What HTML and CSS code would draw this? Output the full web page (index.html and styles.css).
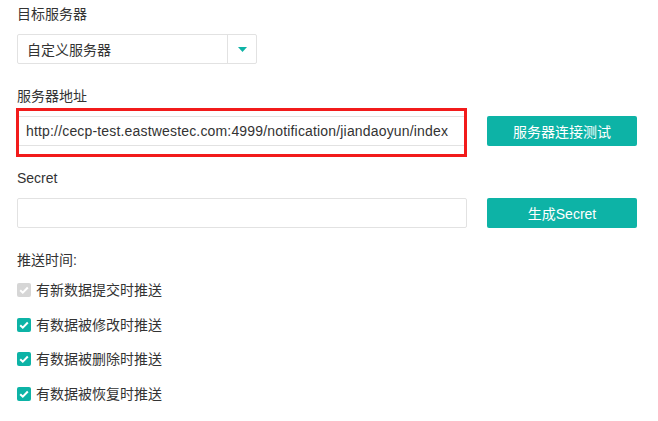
FILE: index.html
```html
<!DOCTYPE html>
<html lang="zh">
<head>
<meta charset="utf-8">
<title>推送设置</title>
<link rel="stylesheet" href="styles.css">
</head>
<body>
<div class="form">
  <div class="field">
    <div class="label">目标服务器</div>
    <div class="select">
      <span class="select-text">自定义服务器</span>
      <span class="select-arrow"><svg width="9" height="5" viewBox="0 0 9 5"><path d="M0 0H9L4.5 5Z" fill="#0db3a6"/></svg></span>
    </div>
  </div>
  <div class="field">
    <div class="label">服务器地址</div>
    <div class="row">
      <div class="input-wrap">
        <div class="input url">http://cecp-test.eastwestec.com:4999/notification/jiandaoyun/index</div>
        <div class="mark"></div>
      </div>
      <div class="btn">服务器连接测试</div>
    </div>
  </div>
  <div class="field">
    <div class="label">Secret</div>
    <div class="row">
      <div class="input-wrap">
        <div class="input"></div>
      </div>
      <div class="btn">生成Secret</div>
    </div>
  </div>
  <div class="field">
    <div class="label">推送时间:</div>
    <div class="checks">
      <div class="check"><span class="box disabled"><svg width="14" height="14" viewBox="0 0 14 14"><path d="M3.2 7.2L5.8 9.7L10.8 4.5" fill="none" stroke="#fff" stroke-width="2"/></svg></span>有新数据提交时推送</div>
      <div class="check"><span class="box"><svg width="14" height="14" viewBox="0 0 14 14"><path d="M3.2 7.2L5.8 9.7L10.8 4.5" fill="none" stroke="#fff" stroke-width="2"/></svg></span>有数据被修改时推送</div>
      <div class="check"><span class="box"><svg width="14" height="14" viewBox="0 0 14 14"><path d="M3.2 7.2L5.8 9.7L10.8 4.5" fill="none" stroke="#fff" stroke-width="2"/></svg></span>有数据被删除时推送</div>
      <div class="check"><span class="box"><svg width="14" height="14" viewBox="0 0 14 14"><path d="M3.2 7.2L5.8 9.7L10.8 4.5" fill="none" stroke="#fff" stroke-width="2"/></svg></span>有数据被恢复时推送</div>
    </div>
  </div>
</div>
</body>
</html>
```

FILE: styles.css
```css
html, body {
  margin: 0;
  padding: 0;
  background: #fff;
}
body {
  font-family: "Liberation Sans", "Noto Sans CJK SC", sans-serif;
  font-size: 14px;
  color: #333;
}
.form {
  padding: 4px 0 0 17px;
  display: flex;
  flex-direction: column;
  gap: 22px;
}
.field {
  display: flex;
  flex-direction: column;
  gap: 10px;
}
.label {
  line-height: 20px;
  height: 20px;
}
.select {
  width: 240px;
  height: 30px;
  box-sizing: border-box;
  border: 1px solid #e2e2e2;
  border-radius: 2px;
  display: flex;
  align-items: center;
}
.select-text {
  flex: 1;
  padding-left: 9px;
}
.select-arrow {
  width: 28px;
  height: 28px;
  border-left: 1px solid #e2e2e2;
  display: flex;
  align-items: center;
  justify-content: center;
}
.row {
  display: flex;
  gap: 20px;
}
.input-wrap {
  position: relative;
  width: 450px;
}
.input {
  height: 30px;
  box-sizing: border-box;
  border: 1px solid #e2e2e2;
  border-radius: 2px;
  line-height: 28px;
  padding-left: 8px;
  white-space: nowrap;
  overflow: hidden;
}
.url {
  letter-spacing: 0.17px;
}
.mark {
  position: absolute;
  left: -1px;
  top: -8px;
  right: 0;
  bottom: -11px;
  border: 3px solid #f21b1b;
}
.btn {
  width: 150px;
  height: 30px;
  border-radius: 2px;
  background: #0db3a6;
  color: #fff;
  display: flex;
  align-items: center;
  justify-content: center;
}
.checks {
  display: flex;
  flex-direction: column;
  gap: 14.5px;
}
.check {
  display: flex;
  align-items: center;
  gap: 5px;
  line-height: 20px;
  height: 20px;
}
.box {
  width: 14px;
  height: 14px;
  border-radius: 2px;
  background: #0db3a6;
  display: flex;
}
.box.disabled {
  background: #d6d6d6;
}
```
